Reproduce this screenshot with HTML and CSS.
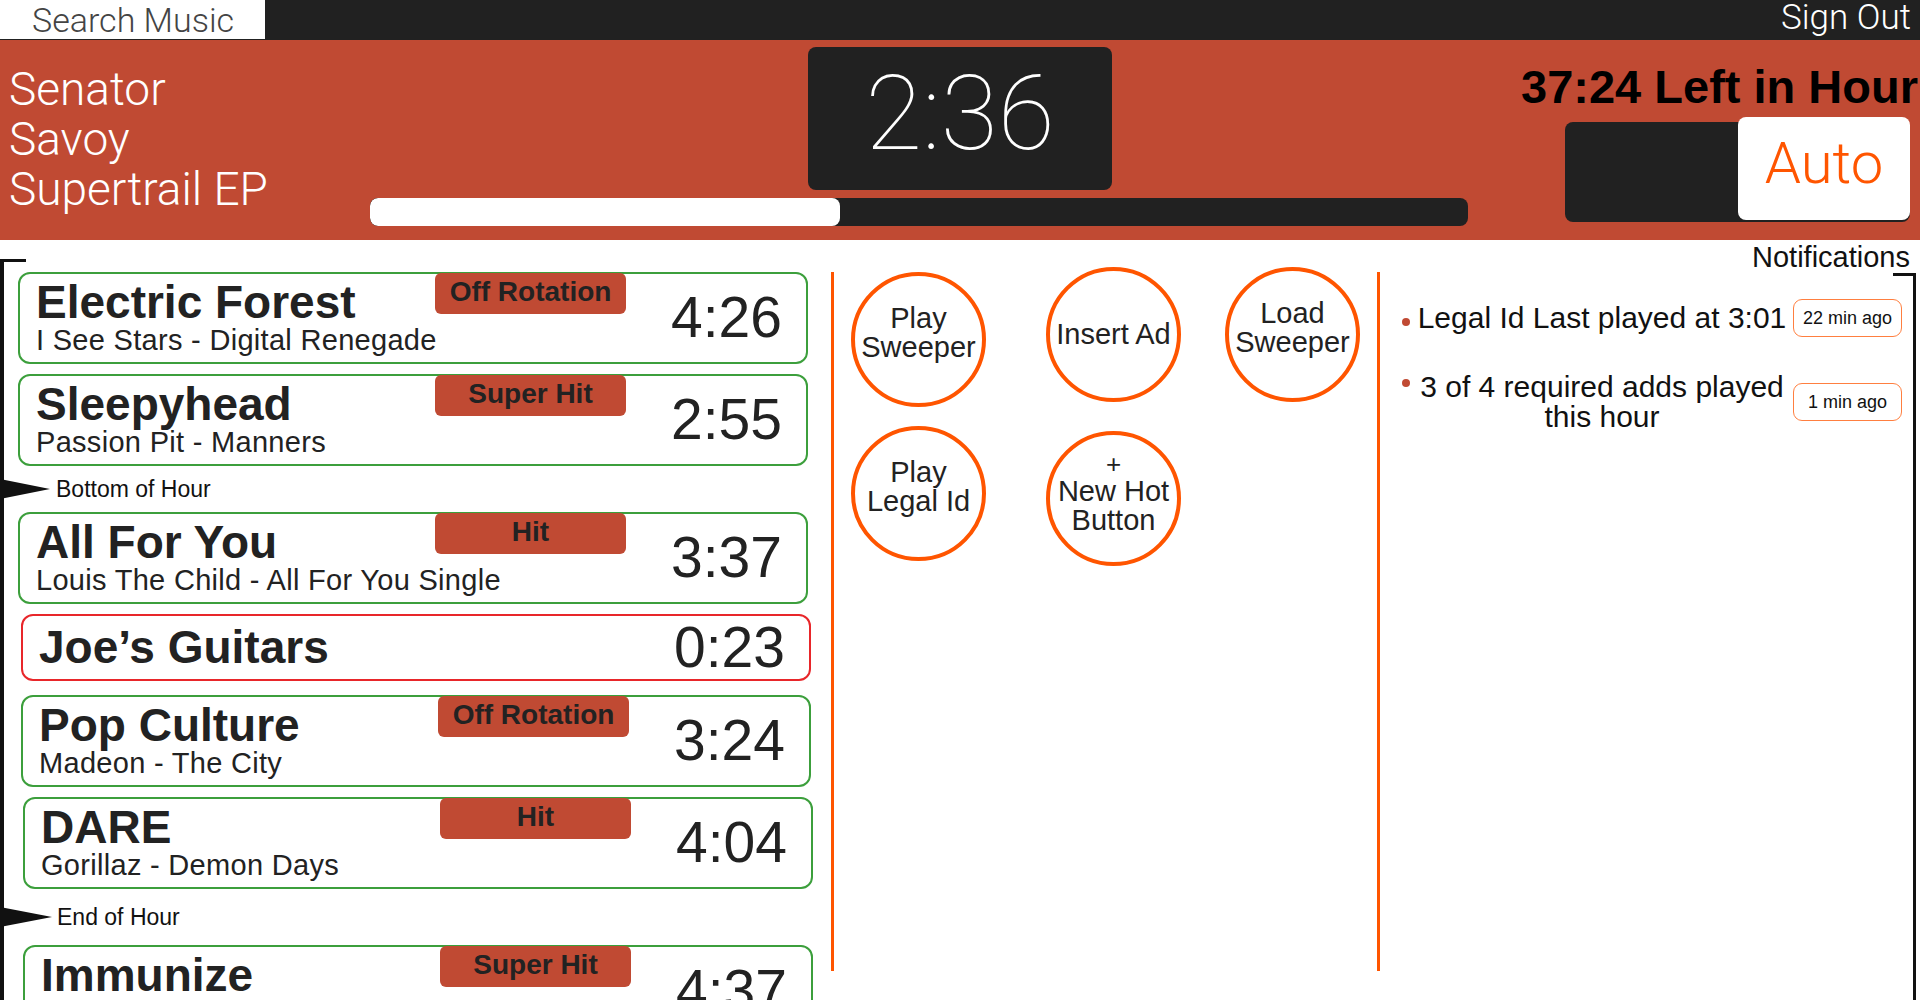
FILE: index.html
```html
<!DOCTYPE html>
<html lang="en">
<head>
<meta charset="utf-8">
<title>Radio Automation</title>
<link rel="stylesheet" href="styles.css">
</head>
<body>
<div class="topbar">
  <div class="search">Search Music</div>
  <div class="signout">Sign Out</div>
</div>
<header class="header">
  <div class="song">
    <div>Senator</div>
    <div>Savoy</div>
    <div>Supertrail EP</div>
  </div>
  <div class="center">
    <div class="timer">2:36</div>
    <div class="progress"><div class="fill" style="width:42.8%"></div></div>
  </div>
  <div class="right">
    <div class="left-hour">37:24 Left in Hour</div>
    <div class="toggle"><div class="knob">Auto</div></div>
  </div>
</header>
<main class="main">
  <section class="queue">
    <div class="card">
      <div class="title">Electric Forest</div>
      <div class="badge">Off Rotation</div>
      <div class="time">4:26</div>
      <div class="sub">I See Stars - Digital Renegade</div>
    </div>
    <div class="card">
      <div class="title">Sleepyhead</div>
      <div class="badge">Super Hit</div>
      <div class="time">2:55</div>
      <div class="sub">Passion Pit - Manners</div>
    </div>
    <div class="marker">
      <svg class="arrow" width="50" height="20" viewBox="0 0 50 20"><polygon points="0,0 50,10 0,20" fill="#111"/></svg>
      <span>Bottom of Hour</span>
    </div>
    <div class="card">
      <div class="title">All For You</div>
      <div class="badge">Hit</div>
      <div class="time">3:37</div>
      <div class="sub">Louis The Child - All For You Single</div>
    </div>
    <div class="card jingle s1">
      <div class="title">Joe’s Guitars</div>
      <div class="time">0:23</div>
    </div>
    <div class="card s1">
      <div class="title">Pop Culture</div>
      <div class="badge">Off Rotation</div>
      <div class="time">3:24</div>
      <div class="sub">Madeon - The City</div>
    </div>
    <div class="card s2">
      <div class="title">DARE</div>
      <div class="badge">Hit</div>
      <div class="time">4:04</div>
      <div class="sub">Gorillaz - Demon Days</div>
    </div>
    <div class="marker end">
      <svg class="arrow" width="52" height="20" viewBox="0 0 52 20"><polygon points="0,0 52,10 0,20" fill="#111"/></svg>
      <span>End of Hour</span>
    </div>
    <div class="card s2">
      <div class="title">Immunize</div>
      <div class="badge">Super Hit</div>
      <div class="time">4:37</div>
      <div class="sub">Pendulum - Immersion</div>
    </div>
  </section>
  <section class="hot">
    <div class="hot-grid">
      <div class="circle low">Play<br>Sweeper</div>
      <div class="circle one">Insert Ad</div>
      <div class="circle">Load<br>Sweeper</div>
      <div class="circle">Play<br>Legal Id</div>
      <div class="circle low new"><span class="plus">+</span>New Hot<br>Button</div>
    </div>
  </section>
  <section class="notes">
    <div class="notes-title">Notifications</div>
    <div class="note-list">
      <div class="note">
        <span class="dot"></span>
        <div class="note-text">Legal Id Last played at 3:01</div>
        <div class="ago">22 min ago</div>
      </div>
      <div class="note multi">
        <span class="dot"></span>
        <div class="note-text">3 of 4 required adds played this hour</div>
        <div class="ago">1 min ago</div>
      </div>
    </div>
  </section>
</main>
</body>
</html>
```
FILE: styles.css
```css
* { box-sizing: border-box; }
html, body { margin: 0; padding: 0; }
body {
  width: 1920px;
  height: 1000px;
  overflow: hidden;
  background: #fff;
  font-family: "Liberation Sans", Arial, sans-serif;
  color: #222;
}

/* top bar */
.topbar {
  height: 40px;
  background: #212121;
  display: flex;
  justify-content: space-between;
  align-items: flex-start;
}
.search {
  width: 265px;
  height: 39px;
  background: #fff;
  color: #444;
  font-family: Roboto, sans-serif;
  font-weight: 300;
  font-size: 34px;
  line-height: 37px;
  padding: 2px 0 0 32px;
  white-space: nowrap;
}
.signout {
  color: #fff;
  font-family: Roboto, sans-serif;
  font-weight: 300;
  font-size: 35px;
  line-height: 36px;
  padding-right: 9px;
}

/* header */
.header {
  height: 200px;
  background: #c04a33;
  display: flex;
}
.song {
  width: 370px;
  padding: 24px 0 0 9px;
  color: #fff;
  font-family: Roboto, sans-serif;
  font-weight: 300;
  font-size: 46px;
  line-height: 50px;
  white-space: nowrap;
}
.center {
  width: 1098px;
  display: flex;
  flex-direction: column;
  padding-top: 7px;
}
.timer {
  margin-left: 438px;
  width: 304px;
  height: 143px;
  background: #212121;
  border-radius: 8px;
  display: flex;
  align-items: center;
  justify-content: center;
  padding-bottom: 10px;
  color: #fff;
  font-family: Roboto, sans-serif;
  font-weight: 100;
  font-size: 104px;
  line-height: 1;
}
.progress {
  margin-top: 8px;
  height: 28px;
  background: #212121;
  border-radius: 8px;
  overflow: hidden;
}
.fill {
  height: 100%;
  background: #fff;
  border-radius: 8px;
}
.right {
  flex: 1;
  display: flex;
  flex-direction: column;
  align-items: flex-end;
  padding-top: 23px;
}
.left-hour {
  font-weight: bold;
  font-size: 47px;
  line-height: 47px;
  color: #000;
  padding-right: 2px;
  white-space: nowrap;
}
.toggle {
  margin-top: 12px;
  margin-right: 10px;
  width: 345px;
  height: 100px;
  background: #212121;
  border-radius: 8px;
  display: flex;
  justify-content: flex-end;
  align-items: flex-start;
}
.knob {
  width: 172px;
  height: 103px;
  margin-top: -5px;
  background: #fff;
  border-radius: 8px;
  display: flex;
  align-items: center;
  justify-content: center;
  padding-bottom: 12px;
  color: #ff5500;
  font-family: Roboto, sans-serif;
  font-weight: 300;
  font-size: 58px;
  line-height: 1;
}

/* main */
.main {
  display: flex;
  height: 760px;
}

/* queue */
.queue {
  width: 831px;
  margin-top: 19px;
  border-left: 4px solid #111;
  display: flex;
  flex-direction: column;
  gap: 10px;
}
.queue::before {
  content: "";
  display: block;
  width: 22px;
  height: 3px;
  background: #111;
  flex: none;
}
.card {
  flex: none;
  width: 790px;
  margin-left: 14px;
  border: 2px solid #3c9f3c;
  border-radius: 12px;
  display: grid;
  grid-template-columns: 1fr 191px 156px;
  grid-template-areas:
    "title badge time"
    "sub sub time";
  padding: 0 24px 8px 16px;
}
.card.s1 { margin-left: 17px; }
.card.s2 { margin-left: 19px; }
.title {
  grid-area: title;
  font-weight: bold;
  font-size: 46px;
  line-height: 46px;
  margin-top: 5px;
  white-space: nowrap;
  color: #222;
}
.sub {
  grid-area: sub;
  font-size: 29px;
  line-height: 28px;
  letter-spacing: 0.3px;
  margin-top: 1px;
  white-space: nowrap;
  color: #222;
}
.badge {
  grid-area: badge;
  align-self: start;
  height: 41px;
  margin-top: -1px;
  background: #c04a33;
  border-radius: 6px;
  color: #222;
  font-weight: bold;
  font-size: 28px;
  line-height: 34px;
  padding-top: 2px;
  text-align: center;
  white-space: nowrap;
}
.time {
  grid-area: time;
  align-self: center;
  justify-self: end;
  margin-top: 6px;
  font-size: 57px;
  line-height: 57px;
  color: #222;
}
.card.jingle {
  border-color: #e8262a;
  grid-template-areas: "title . time";
  grid-template-rows: 46px;
  align-items: center;
  padding: 8px 24px 9px 16px;
  margin-bottom: 4px;
}
.card.jingle .title { margin-top: 0; }
.card.jingle .time { margin-top: 0; line-height: 46px; }

.marker {
  flex: none;
  height: 26px;
  margin-left: -4px;
  display: flex;
  align-items: center;
  gap: 6px;
  font-size: 23px;
  color: #111;
}
.marker.end { height: 36px; gap: 5px; }
.arrow { display: block; }

/* hot buttons */
.hot {
  width: 549px;
  margin-top: 32px;
  height: 699px;
  border-left: 3px solid #ff5500;
  border-right: 3px solid #ff5500;
}
.hot-grid {
  margin-top: -5px;
  padding-left: 17px;
  display: grid;
  grid-template-columns: 195px 179px 135px;
  row-gap: 19px;
  align-items: start;
}
.circle {
  width: 135px;
  height: 135px;
  border: 4px solid #ff5500;
  border-radius: 50%;
  display: flex;
  flex-direction: column;
  align-items: center;
  justify-content: center;
  text-align: center;
  padding-bottom: 13px;
  font-size: 29px;
  line-height: 29px;
  color: #222;
  white-space: nowrap;
}
.circle.low { margin-top: 5px; }
.circle.one { padding-bottom: 0; }
.circle.new { padding-bottom: 10px; }
.plus {
  display: block;
  font-size: 26px;
  line-height: 25px;
}

/* notifications */
.notes {
  flex: 1;
  display: flex;
  flex-direction: column;
}
.notes-title {
  text-align: right;
  font-size: 29px;
  line-height: 29px;
  padding-top: 3px;
  padding-right: 10px;
  color: #111;
}
.note-list {
  flex: 1;
  margin-top: 1px;
  margin-right: 4px;
  border-right: 3px solid #111;
  padding-left: 22px;
}
.note-list::before {
  content: "";
  display: block;
  width: 23px;
  height: 3px;
  margin-left: auto;
  margin-right: -3px;
  background: #111;
}
.note {
  display: flex;
  align-items: center;
  margin-top: 23px;
}
.note.multi { margin-top: 35px; }
.dot {
  flex: none;
  align-self: flex-start;
  width: 8px;
  height: 8px;
  margin-top: 19px;
  border-radius: 50%;
  background: #c04a33;
}
.note.multi .dot { margin-top: 7px; }
.note-text {
  width: 376px;
  margin-left: 4px;
  text-align: center;
  font-size: 30px;
  line-height: 30px;
  color: #111;
}
.ago {
  flex: none;
  width: 109px;
  height: 38px;
  margin-left: 3px;
  border: 1.5px solid #ff7f40;
  border-radius: 9px;
  display: flex;
  align-items: center;
  justify-content: center;
  font-size: 18px;
  color: #111;
}
```
